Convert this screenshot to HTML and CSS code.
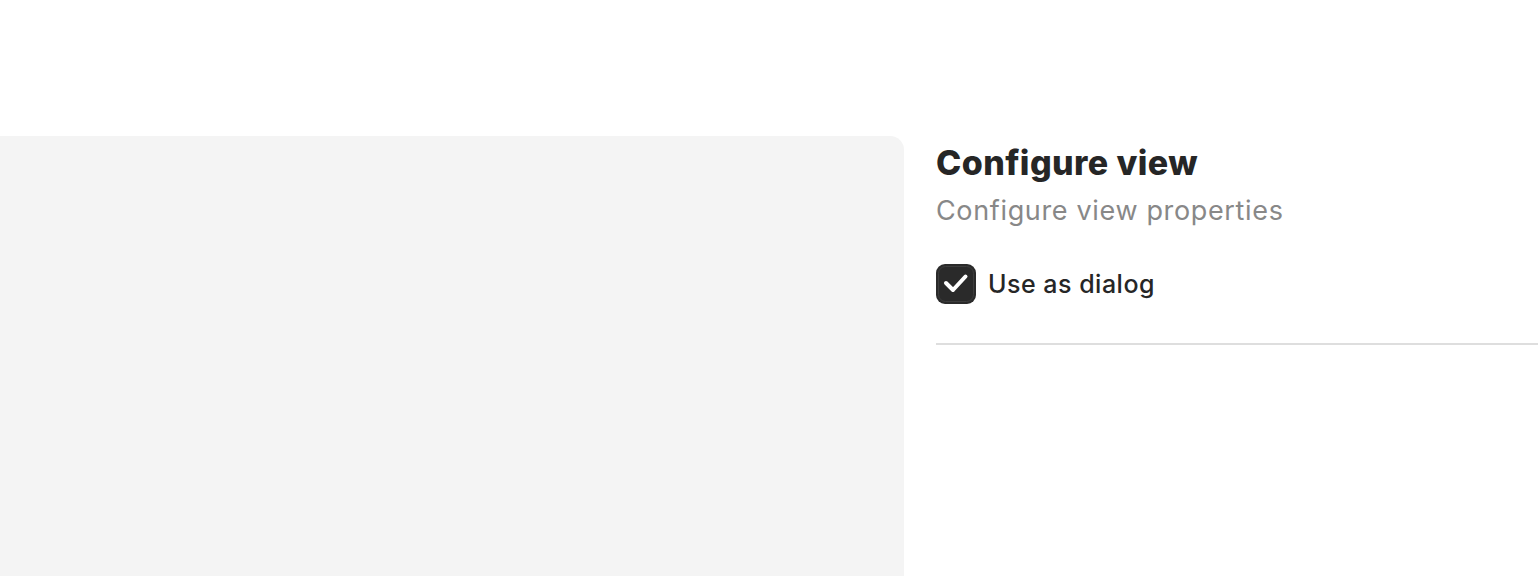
FILE: index.html
```html
<!DOCTYPE html>
<html>
<head>
<meta charset="utf-8">
<link rel="stylesheet" href="styles.css">
</head>
<body>
<div class="layout">
  <div class="canvas"></div>
  <aside class="panel">
    <h1 class="title">Configure view</h1>
    <p class="subtitle">Configure view properties</p>
    <label class="check-row">
      <span class="checkbox">
        <svg viewBox="0 0 40 40" width="40" height="40">
          <rect x="2.5" y="2.5" width="35" height="35" rx="7" fill="none" stroke="#3d3d3d" stroke-width="1"/>
          <path d="M10 19 L17 26 L29.5 12.5" fill="none" stroke="#fff" stroke-width="4" stroke-linecap="round" stroke-linejoin="round"/>
        </svg>
      </span>
      <span class="check-label">Use as dialog</span>
    </label>
    <div class="divider"></div>
  </aside>
</div>
</body>
</html>
```
FILE: styles.css
```css
html, body {
  margin: 0;
  padding: 0;
  background: #fff;
  font-family: Inter, "Noto Sans", sans-serif;
  color: #262626;
  overflow: hidden;
}
.layout {
  display: flex;
  gap: 32px;
  padding-top: 136px;
  height: 576px;
  box-sizing: border-box;
}
.canvas {
  width: 904px;
  flex: none;
  background: #f4f4f4;
  border-top-right-radius: 14px;
}
.panel {
  flex: 1;
  display: flex;
  flex-direction: column;
}
.title {
  margin: 7px 0 0;
  font-size: 34px;
  font-weight: 800;
  line-height: 40px;
  letter-spacing: 0.4px;
}
.subtitle {
  margin: 12px 0 0;
  font-size: 27px;
  line-height: 32px;
  color: #888;
  font-weight: 400;
  letter-spacing: 0.65px;
}
.check-row {
  margin-top: 37px;
  display: flex;
  align-items: center;
  gap: 12px;
}
.checkbox {
  width: 40px;
  height: 40px;
  border-radius: 9px;
  background: #2a2a2a;
  display: flex;
}
.check-label {
  font-size: 25px;
  font-weight: 500;
  color: #262626;
  letter-spacing: 0.5px;
}
.divider {
  margin-top: 39px;
  height: 2px;
  background: #dedede;
}
```
